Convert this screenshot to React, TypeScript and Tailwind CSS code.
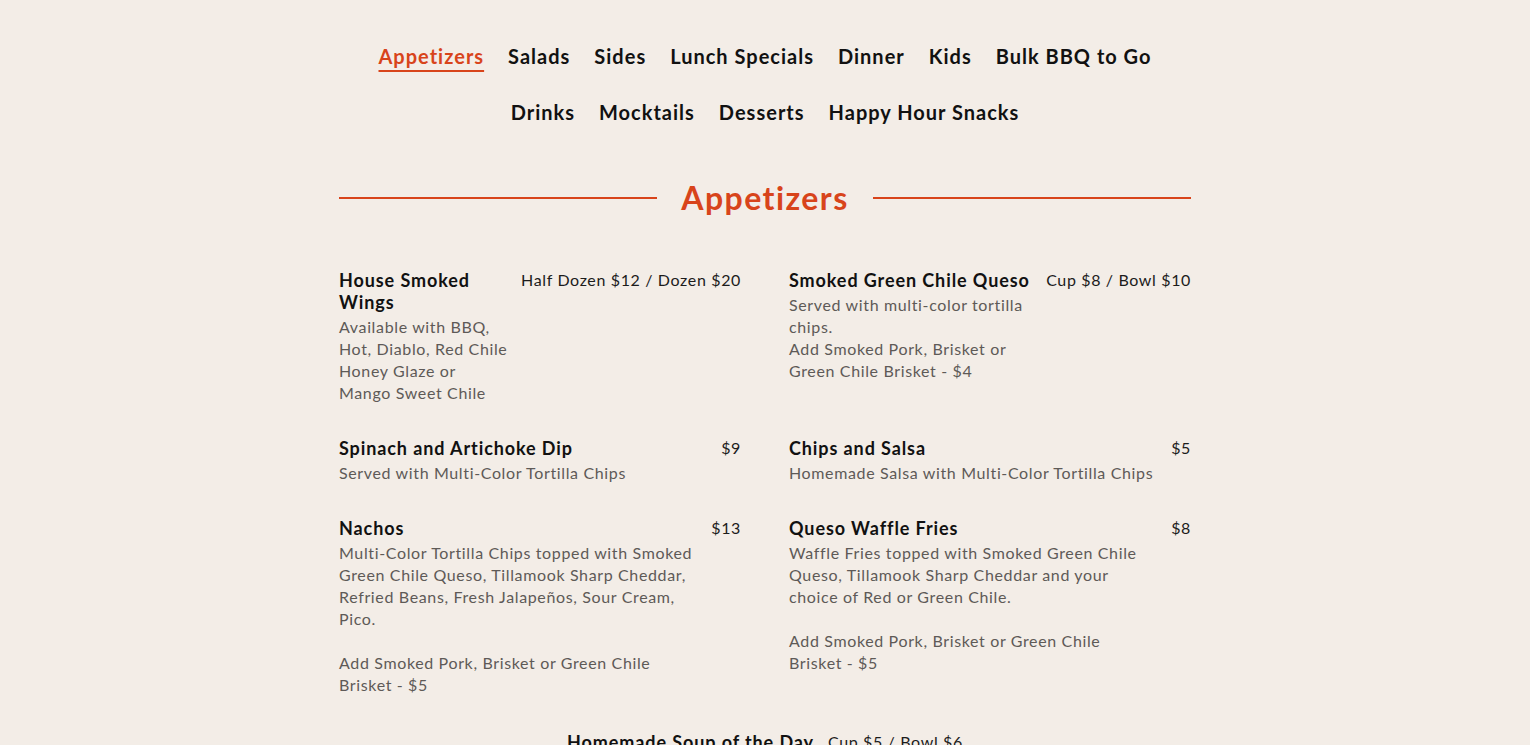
import React from "react";

type Item = {
  name: string;
  price: string;
  desc: string[];
};

const navRows = [
  ["Appetizers", "Salads", "Sides", "Lunch Specials", "Dinner", "Kids", "Bulk BBQ to Go"],
  ["Drinks", "Mocktails", "Desserts", "Happy Hour Snacks"],
];

const items: Item[] = [
  {
    name: "House Smoked Wings",
    price: "Half Dozen $12 / Dozen $20",
    desc: ["Available with BBQ, Hot, Diablo, Red Chile Honey Glaze or Mango Sweet Chile"],
  },
  {
    name: "Smoked Green Chile Queso",
    price: "Cup $8 / Bowl $10",
    desc: ["Served with multi-color tortilla chips.", "Add Smoked Pork, Brisket or Green Chile Brisket - $4"],
  },
  {
    name: "Spinach and Artichoke Dip",
    price: "$9",
    desc: ["Served with Multi-Color Tortilla Chips"],
  },
  {
    name: "Chips and Salsa",
    price: "$5",
    desc: ["Homemade Salsa with Multi-Color Tortilla Chips"],
  },
  {
    name: "Nachos",
    price: "$13",
    desc: [
      "Multi-Color Tortilla Chips topped with Smoked Green Chile Queso, Tillamook Sharp Cheddar, Refried Beans, Fresh Jalapeños, Sour Cream, Pico.",
      "",
      "Add Smoked Pork, Brisket or Green Chile Brisket\u00a0-\u00a0$5",
    ],
  },
  {
    name: "Queso Waffle Fries",
    price: "$8",
    desc: [
      "Waffle Fries topped with Smoked Green Chile Queso, Tillamook Sharp Cheddar and your choice of Red or Green Chile.",
      "",
      "Add Smoked Pork, Brisket or Green Chile Brisket\u00a0-\u00a0$5",
    ],
  },
];

function MenuItem({ item }: { item: Item }) {
  return (
    <div className="flex items-start gap-3">
      <div className="min-w-0 flex-1">
        <h3 className="text-[18px] leading-[22px] font-bold tracking-[0.05em] text-[#111]">{item.name}</h3>
        <div className="mt-[3px] text-[16px] leading-[22px] tracking-[0.04em] text-[#5e5a57]">
          {item.desc.map((line, i) =>
            line === "" ? <div key={i} className="h-[22px]" /> : <p key={i}>{line}</p>
          )}
        </div>
      </div>
      <div className="shrink-0 text-[16px] leading-[22px] tracking-[0.04em] text-[#1c1c1c]">{item.price}</div>
    </div>
  );
}

export default function App() {
  return (
    <div
      className="min-h-screen bg-[#f3ede7] text-[#111]"
      style={{ fontFamily: "Lato, 'Noto Sans', sans-serif" }}
    >
      <div className="mx-auto w-[852px] pt-[42px]">
        {/* Category nav */}
        <nav className="flex flex-col items-center gap-[28px]">
          {navRows.map((row, r) => (
            <div key={r} className="flex items-center gap-6">
              {row.map((label) => (
                <a
                  key={label}
                  href="#"
                  className={
                    label === "Appetizers"
                      ? "text-[20px] leading-[28px] font-bold tracking-[0.05em] text-[#d8441b] underline decoration-2 underline-offset-[6px]"
                      : "text-[20px] leading-[28px] font-bold tracking-[0.05em] text-[#111]"
                  }
                >
                  {label}
                </a>
              ))}
            </div>
          ))}
        </nav>

        {/* Section heading */}
        <div className="mt-[52px] flex items-center gap-6">
          <div className="h-[2px] flex-1 bg-[#d8441b]" />
          <h2 className="text-[32px] leading-[40px] font-bold tracking-[0.045em] text-[#d8441b]">Appetizers</h2>
          <div className="h-[2px] flex-1 bg-[#d8441b]" />
        </div>

        {/* Items */}
        <div className="mt-[51px] grid grid-cols-2 gap-x-12 gap-y-[33px]">
          {items.map((item) => (
            <MenuItem key={item.name} item={item} />
          ))}
          <div className="col-span-2 flex justify-center gap-3.5 pt-[2px]">
            <h3 className="text-[18px] leading-[22px] font-bold tracking-[0.05em] text-[#111]">Homemade Soup of the Day</h3>
            <span className="text-[16px] leading-[22px] tracking-[0.04em] text-[#1c1c1c]">Cup $5 / Bowl $6</span>
          </div>
        </div>
      </div>
    </div>
  );
}
